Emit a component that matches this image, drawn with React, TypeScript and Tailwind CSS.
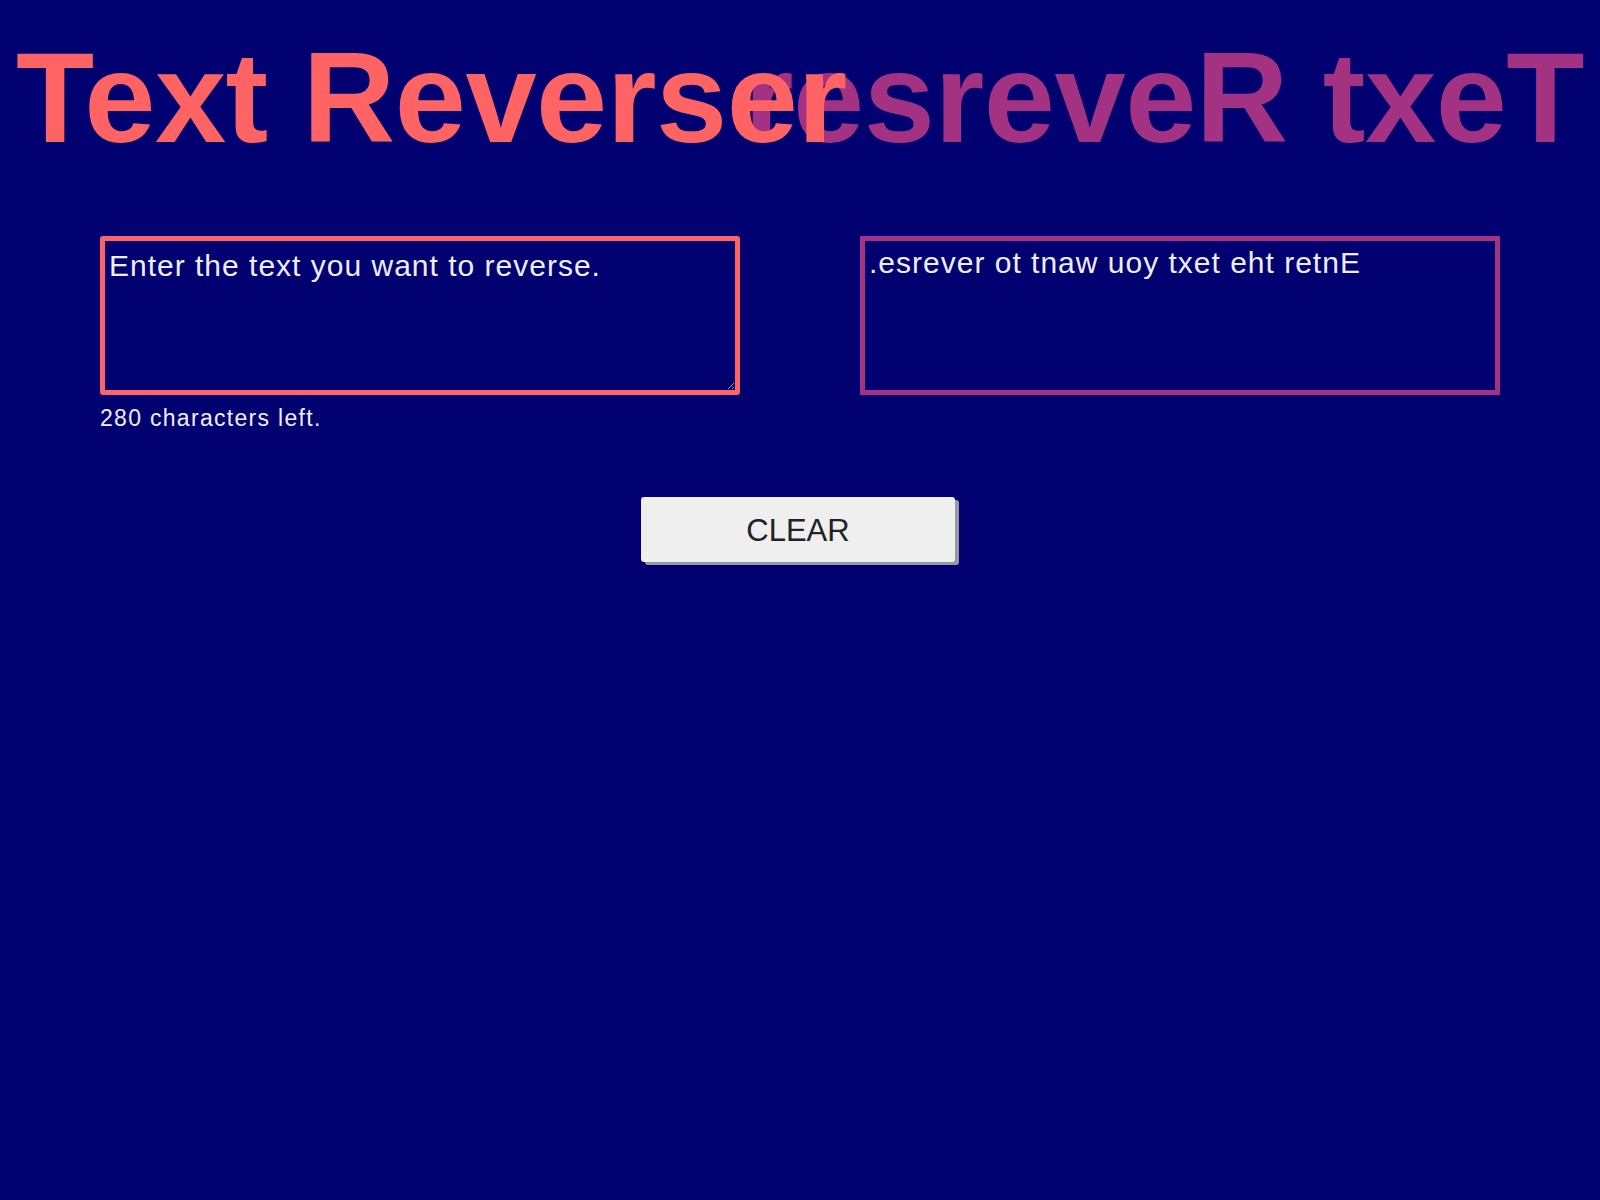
import React, { useState } from "react";

const MAX = 280;
const PLACEHOLDER = "Enter the text you want to reverse.";

const reverse = (s: string) => s.split("").reverse().join("");

const App = () => {
  const [text, setText] = useState("");

  const output = text.length ? reverse(text) : reverse(PLACEHOLDER);

  return (
    <main
      className="min-h-[1200px] w-full bg-[#000070] text-[#eeeefa]"
      style={{ fontFamily: '"Liberation Sans", Arial, sans-serif' }}
    >
      <header className="grid px-[16px] pt-[34px]">
        <h1 className="col-start-1 row-start-1 justify-self-end text-[128px] font-bold leading-none tracking-[-0.5px] text-[#a33282] whitespace-nowrap">
          {reverse("Text Reverser")}
        </h1>
        <h1 className="col-start-1 row-start-1 justify-self-start text-[128px] font-bold leading-none tracking-[-0.5px] text-[#ff6363] whitespace-nowrap">
          Text Reverser
        </h1>
      </header>

      <section className="mx-auto mt-[74px] flex w-[1400px] items-start justify-between">
        <div className="flex flex-col">
          <textarea
            value={text}
            maxLength={MAX}
            onChange={(e) => setText(e.target.value)}
            placeholder={PLACEHOLDER}
            className="h-[159px] w-[640px] rounded-[3px] border-[5px] border-[#ff6363] bg-transparent px-[4px] pt-[8px] text-[30px] leading-[1.15] tracking-[1px] text-[#eeeefa] outline-none placeholder:text-[#eeeefa]"
          />
          <p className="mt-[10px] text-[23px] leading-[1.15] tracking-[1.3px]">
            {MAX - text.length} characters left.
          </p>
        </div>
        <div className="h-[159px] w-[640px] border-[5px] border-[#a33282] px-[4px] pt-[5px] text-[30px] leading-[1.15] tracking-[1px] break-words">
          {output}
        </div>
      </section>

      <div className="mt-[66px] flex justify-center pr-[4px]">
        <button
          onClick={() => setText("")}
          className="h-[65px] w-[314px] rounded-[3px] bg-[#efefef] pt-[2px] text-[31px] text-[#222222] shadow-[4px_3px_0_#9a9aa6]"
        >
          CLEAR
        </button>
      </div>
    </main>
  );
};

export default App;
